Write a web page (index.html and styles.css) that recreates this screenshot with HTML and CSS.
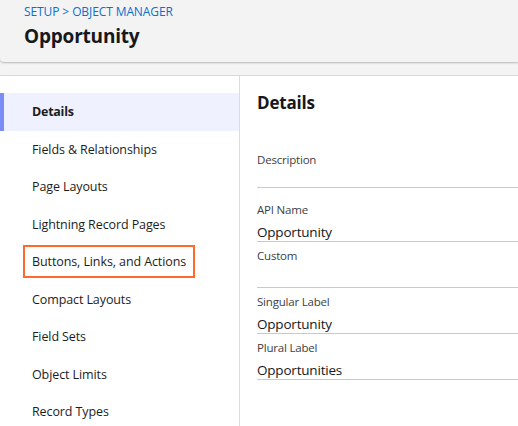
FILE: index.html
```html
<!DOCTYPE html>
<html lang="en">
<head>
    <meta charset="UTF-8">
    <title>Opportunity | Object Manager</title>
    <link rel="stylesheet" href="styles.css">
</head>
<body>
    <div class="page-header">
        <div class="breadcrumb"><a href="#">SETUP</a> &gt; <a href="#">OBJECT MANAGER</a></div>
        <h1>Opportunity</h1>
    </div>

    <div class="content">
        <ul class="side-nav">
            <li class="nav-item active">Details</li>
            <li class="nav-item">Fields &amp; Relationships</li>
            <li class="nav-item">Page Layouts</li>
            <li class="nav-item">Lightning Record Pages</li>
            <li class="nav-item"><span class="callout">Buttons, Links, and Actions</span></li>
            <li class="nav-item">Compact Layouts</li>
            <li class="nav-item">Field Sets</li>
            <li class="nav-item">Object Limits</li>
            <li class="nav-item">Record Types</li>
        </ul>

        <div class="detail-panel">
            <h2>Details</h2>
            <div class="field field-first">
                <div class="field-label">Description</div>
                <div class="field-value"></div>
            </div>
            <div class="field field-spaced">
                <div class="field-label">API Name</div>
                <div class="field-value">Opportunity</div>
            </div>
            <div class="field">
                <div class="field-label">Custom</div>
                <div class="field-value"></div>
            </div>
            <div class="field">
                <div class="field-label">Singular Label</div>
                <div class="field-value">Opportunity</div>
            </div>
            <div class="field">
                <div class="field-label">Plural Label</div>
                <div class="field-value">Opportunities</div>
            </div>
        </div>
    </div>
</body>
</html>
```

FILE: styles.css
```css
body {
    margin: 0;
    font-family: "Open Sans", "Liberation Sans", sans-serif;
    color: #16181a;
    background-color: #f4f4f4;
    overflow: hidden;
}
.page-header {
    height: 62px;
    box-sizing: border-box;
    padding: 4px 24px 0;
    background-color: #f3f3f3;
    border-bottom-left-radius: 4px;
    box-shadow: 0 1px 2px rgba(0, 0, 0, 0.25);
    position: relative;
}
.breadcrumb {
    font-size: 12px;
    line-height: 16px;
    color: #0b6fd0;
    letter-spacing: -0.1px;
}
.breadcrumb a {
    color: #0b6fd0;
    text-decoration: none;
}
.page-header h1 {
    margin: 3px 0 0;
    font-size: 19px;
    line-height: 26px;
    font-weight: 700;
    letter-spacing: -0.2px;
}
.content {
    display: flex;
    margin-top: 13px;
    height: 350px;
    background-color: #fff;
    border-top: 1px solid #d8d8d8;
}
.side-nav {
    list-style: none;
    margin: 0;
    padding: 17px 0 0;
    width: 239px;
    border-right: 1px solid #dcdcdc;
}
.nav-item {
    height: 37.5px;
    display: flex;
    align-items: center;
    padding-left: 32px;
    font-size: 12.5px;
    letter-spacing: -0.1px;
    color: #1d1d1d;
}
.nav-item.active {
    font-weight: 700;
    letter-spacing: -0.25px;
    background-color: #eff2fe;
    box-shadow: inset 4px 0 0 #7b8cf7;
}
.callout {
    margin-left: -9px;
    padding: 6px 7px 6px 7px;
    border: 2px solid #fe6a2e;
}
.detail-panel {
    flex: 1;
    padding: 0 0 0 17px;
}
.detail-panel h2 {
    margin: 15px 0 0;
    font-size: 17px;
    line-height: 24px;
    font-weight: 700;
    letter-spacing: -0.2px;
}
.field {
    border-bottom: 1px solid #c9c9c9;
}
.field-first {
    margin-top: 31px;
}
.field-spaced {
    padding-top: 8px;
}
.field-label {
    font-size: 11.5px;
    line-height: 16px;
    padding-top: 6px;
    color: #3e3e3e;
    letter-spacing: -0.2px;
}
.field-value {
    margin-top: 4px;
    font-size: 13.5px;
    line-height: 20px;
    height: 19px;
    letter-spacing: -0.2px;
}
.field-first .field-value {
    margin-top: 0;
}
```
